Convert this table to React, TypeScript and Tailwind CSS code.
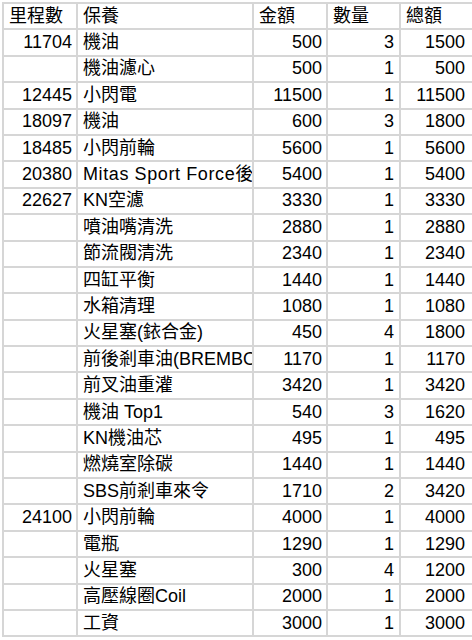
import React from "react";

type Row = [string, string, string, string, string];

const rows: Row[] = [
  ["11704", "機油", "500", "3", "1500"],
  ["", "機油濾心", "500", "1", "500"],
  ["12445", "小閃電", "11500", "1", "11500"],
  ["18097", "機油", "600", "3", "1800"],
  ["18485", "小閃前輪", "5600", "1", "5600"],
  ["20380", "Mitas Sport Force後輪", "5400", "1", "5400"],
  ["22627", "KN空濾", "3330", "1", "3330"],
  ["", "噴油嘴清洗", "2880", "1", "2880"],
  ["", "節流閥清洗", "2340", "1", "2340"],
  ["", "四缸平衡", "1440", "1", "1440"],
  ["", "水箱清理", "1080", "1", "1080"],
  ["", "火星塞(銥合金)", "450", "4", "1800"],
  ["", "前後剎車油(BREMBO)", "1170", "1", "1170"],
  ["", "前叉油重灌", "3420", "1", "3420"],
  ["", "機油 Top1", "540", "3", "1620"],
  ["", "KN機油芯", "495", "1", "495"],
  ["", "燃燒室除碳", "1440", "1", "1440"],
  ["", "SBS前剎車來令", "1710", "2", "3420"],
  ["24100", "小閃前輪", "4000", "1", "4000"],
  ["", "電瓶", "1290", "1", "1290"],
  ["", "火星塞", "300", "4", "1200"],
  ["", "高壓線圈Coil", "2000", "1", "2000"],
  ["", "工資", "3000", "1", "3000"],
];

const header = ["里程數", "保養", "金額", "數量", "總額"];

const cell =
  "flex items-center overflow-hidden whitespace-nowrap border-r-2 border-b-2 border-[#d6d6d6] h-[26.4px]";

export default function App() {
  return (
    <div
      className="w-[472px] h-[640px] overflow-hidden bg-white pl-[2px] pt-[2px] text-[18px] text-black"
      style={{ fontFamily: '"Liberation Sans", "Noto Sans CJK TC", sans-serif' }}
    >
      <div className="grid w-[560px] grid-cols-[74px_176px_74px_73px_160px] border-l-2 border-t-2 border-[#d6d6d6]">
        {header.map((h, i) => (
          <div key={i} className={`${cell} px-[5px]`}>
            {h}
          </div>
        ))}
        {rows.map((r, ri) => (
          <React.Fragment key={ri}>
            <div className={`${cell} justify-end pr-[4px]`}>{r[0]}</div>
            <div className={`${cell} pl-[5px] ${ri === 5 ? "tracking-[0.6px]" : ""}`}>{r[1]}</div>
            <div className={`${cell} justify-end pr-[4px]`}>{r[2]}</div>
            <div className={`${cell} justify-end pr-[5px]`}>{r[3]}</div>
            <div className={`${cell} pl-[3px]`}>
              <span className="w-[61px] text-right">{r[4]}</span>
            </div>
          </React.Fragment>
        ))}
      </div>
    </div>
  );
}
